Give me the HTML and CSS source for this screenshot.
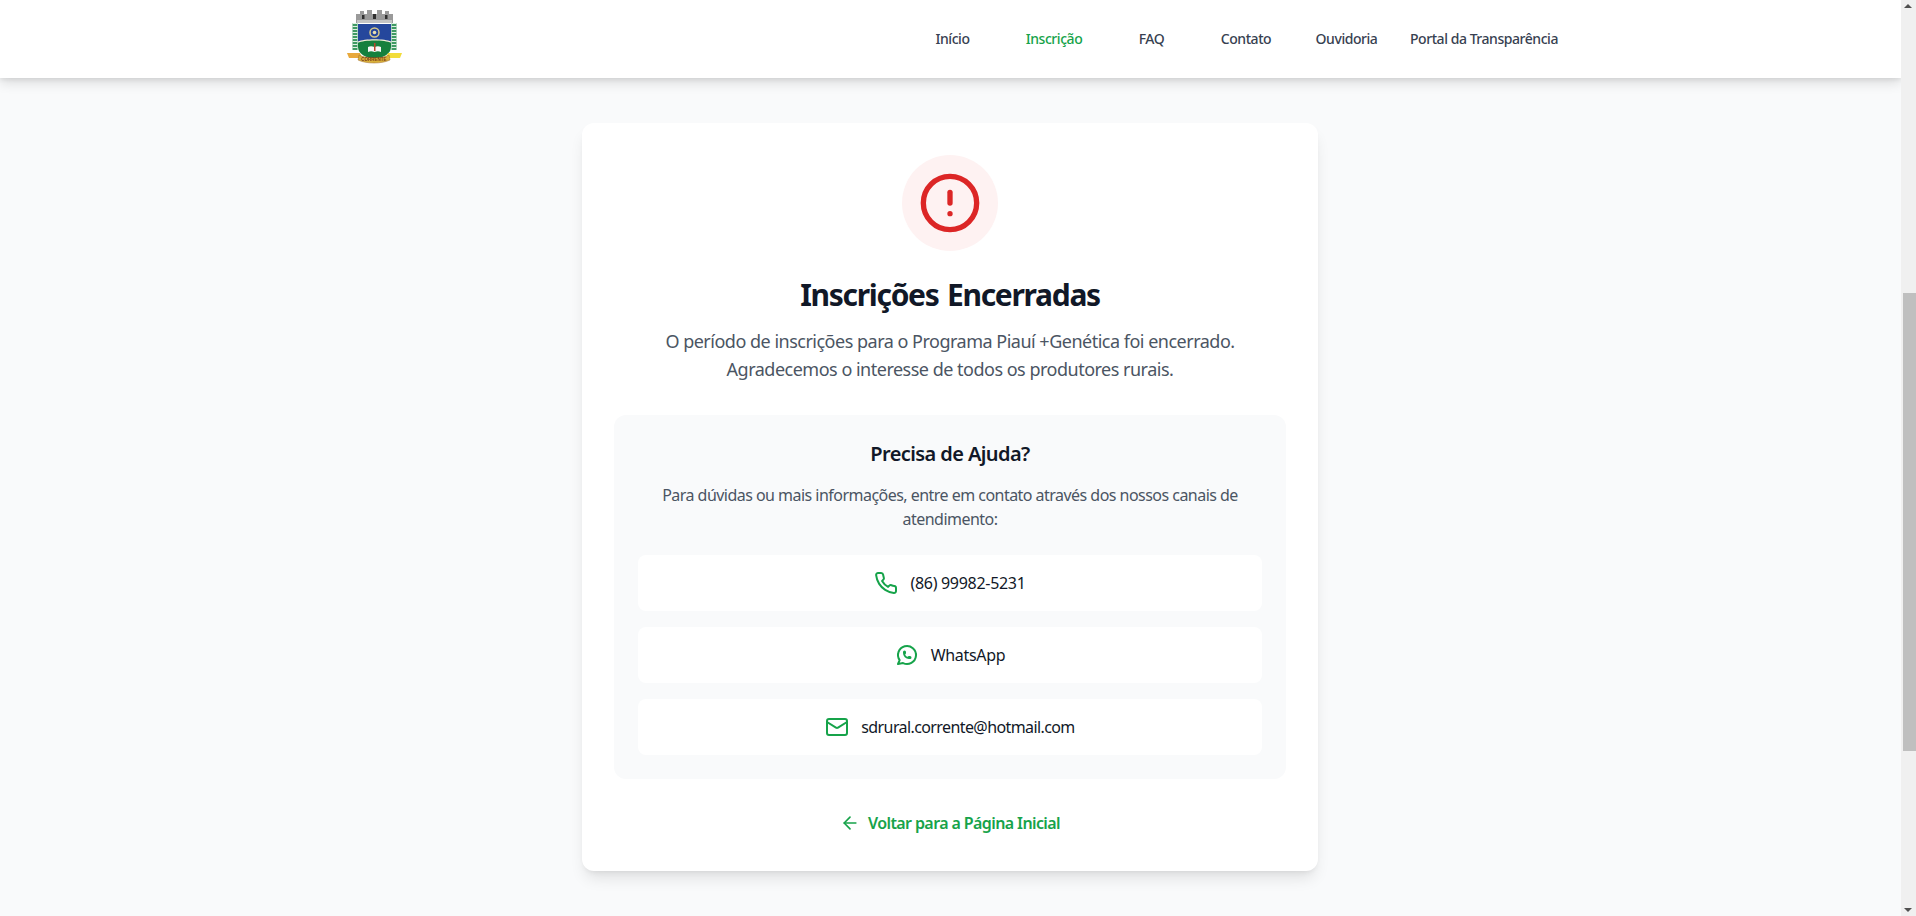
FILE: index.html
```html
<!DOCTYPE html>
<html lang="pt-BR">
<head>
<meta charset="utf-8">
<title>Inscrições Encerradas</title>
<link rel="stylesheet" href="styles.css">
</head>
<body>
<div class="viewport">
  <div class="page">
    <header class="header">
      <div class="header-inner">
        <svg class="logo" viewBox="0 0 64 64" width="64" height="64" role="img" aria-label="Brasão de Corrente">
          <path d="M14 16V7h4V4h4v3h3V3h5v4h5V3h5v4h3V4h4v3h4v9z" fill="#9a9a9a"/>
          <path d="M15 16h35v-3H15z" fill="#c4c4c4"/>
          <rect x="20" y="8" width="2.500" height="4" fill="#2f2f2f"/><rect x="31" y="7" width="3" height="5" fill="#2f2f2f"/><rect x="43" y="8" width="2.500" height="4" fill="#2f2f2f"/>
          <path d="M13 16v27" stroke="#3f9a63" stroke-width="5" fill="none"/>
          <path d="M13 16v27" stroke="#dff0e4" stroke-width="5" stroke-dasharray="1 2" fill="none"/>
          <path d="M52 16v27" stroke="#3f9a63" stroke-width="5" fill="none"/>
          <path d="M52 16v27" stroke="#dff0e4" stroke-width="5" stroke-dasharray="1 2" fill="none"/>
          <path d="M16 17h33v18H16z" fill="#25479c"/>
          <path d="M16 35c6-3 27-3 33 0v5c0 7-8 11-16.500 12C24 51 16 47 16 40z" fill="#15803d"/>
          <path d="M16 34.500c6-3 27-3 33 0v1.200c-6-3-27-3-33 0z" fill="#f5f1d8"/>
          <circle cx="32.500" cy="25.500" r="4.500" fill="none" stroke="#d8c98a" stroke-width="1.500"/>
          <circle cx="32.500" cy="25.500" r="1.800" fill="#eadfae"/>
          <path d="M26 40c2-1 4-1 6.500 0 2.500-1 4.500-1 6.500 0v5c-2-1-4-1-6.500 0-2.500-1-4.500-1-6.500 0z" fill="#f7f7f7"/>
          <path d="M32 36h1.500v8H32z" fill="#b9452c"/>
          <path d="M5 46h13l2 5H7z" fill="#e8a93c"/>
          <path d="M60 46H46l-2 5h14z" fill="#f2dc3a"/>
          <path d="M17 48c8 4 22 4 30 0l1 5c-8 4-24 4-32 0z" fill="#d9b13a" stroke="#a06a2a" stroke-width=".5"/>
          <text class="logo-text" x="32" y="54" text-anchor="middle">CORRENTE</text>
        </svg>
        <nav class="nav">
          <a class="nav-link" href="#">Início</a>
          <a class="nav-link active" href="#">Inscrição</a>
          <a class="nav-link" href="#">FAQ</a>
          <a class="nav-link" href="#">Contato</a>
          <a class="nav-link" href="#">Ouvidoria</a>
          <a class="nav-link" href="#">Portal da Transparência</a>
        </nav>
      </div>
    </header>
    <main class="main">
      <section class="card">
        <div class="alert-circle">
          <svg class="icon-alert" viewBox="0 0 24 24" width="64" height="64" fill="none" stroke="currentColor" stroke-width="2" stroke-linecap="round" stroke-linejoin="round">
            <circle cx="12" cy="12" r="10"/><line x1="12" y1="8" x2="12" y2="12"/><line x1="12" y1="16" x2="12.010" y2="16"/>
          </svg>
        </div>
        <h1 class="title">Inscrições Encerradas</h1>
        <p class="lead">O período de inscrições para o Programa Piauí +Genética foi encerrado.<br>Agradecemos o interesse de todos os produtores rurais.</p>
        <div class="help">
          <h2 class="help-title">Precisa de Ajuda?</h2>
          <p class="help-text">Para dúvidas ou mais informações, entre em contato através dos nossos canais de<br>atendimento:</p>
          <div class="contacts">
            <a class="contact" href="#">
              <svg class="icon" viewBox="0 0 24 24" width="24" height="24" fill="none" stroke="currentColor" stroke-width="2" stroke-linecap="round" stroke-linejoin="round"><path d="M22 16.920v3a2 2 0 0 1-2.180 2 19.790 19.790 0 0 1-8.630-3.070 19.500 19.500 0 0 1-6-6 19.790 19.790 0 0 1-3.070-8.670A2 2 0 0 1 4.110 2h3a2 2 0 0 1 2 1.720 12.840 12.840 0 0 0 .7 2.810 2 2 0 0 1-.45 2.110L8.090 9.910a16 16 0 0 0 6 6l1.270-1.270a2 2 0 0 1 2.110-.45 12.840 12.840 0 0 0 2.810.7A2 2 0 0 1 22 16.920z"/></svg>
              <span>(86) 99982-5231</span>
            </a>
            <a class="contact" href="#">
              <svg class="icon" viewBox="0 0 24 24" width="24" height="24" fill="none" stroke="currentColor" stroke-width="2" stroke-linecap="round" stroke-linejoin="round"><path d="M3 21l1.650-3.800a9 9 0 1 1 3.400 2.900l-5.050.9"/><path d="M9 10a.5.5 0 0 0 1 0V9a.5.5 0 0 0-1 0v1a5 5 0 0 0 5 5h1a.5.5 0 0 0 0-1h-1a.5.5 0 0 0 0 1"/></svg>
              <span>WhatsApp</span>
            </a>
            <a class="contact contact-email" href="#">
              <svg class="icon" viewBox="0 0 24 24" width="24" height="24" fill="none" stroke="currentColor" stroke-width="2" stroke-linecap="round" stroke-linejoin="round"><rect x="2" y="4" width="20" height="16" rx="2"/><path d="m22 7-8.970 5.700a1.940 1.940 0 0 1-2.060 0L2 7"/></svg>
              <span>sdrural.corrente@hotmail.com</span>
            </a>
          </div>
        </div>
        <a class="back" href="#">
          <svg viewBox="0 0 24 24" width="20" height="20" fill="none" stroke="currentColor" stroke-width="2" stroke-linecap="round" stroke-linejoin="round"><path d="m12 19-7-7 7-7"/><path d="M19 12H5"/></svg>
          <span>Voltar para a Página Inicial</span>
        </a>
      </section>
    </main>
  </div>
  <aside class="scrollbar" aria-hidden="true">
    <span class="arrow arrow-up"></span>
    <span class="thumb"></span>
    <span class="arrow arrow-down"></span>
  </aside>
</div>
</body>
</html>
```
FILE: styles.css
```css
* { box-sizing: border-box; }
html, body { margin: 0; height: 100%; overflow: hidden; }
body { font-family: "Noto Sans", "Open Sans", sans-serif; background: #f9fafb; color: #111827; }
a { text-decoration: none; color: inherit; }
h1, h2, p { margin: 0; }

.viewport { display: flex; height: 916px; }
.page { flex: 1; min-width: 0; }

.header { height: 78px; background: #fff; box-shadow: 0 4px 12px rgba(0,0,0,.14), 0 2px 4px rgba(0,0,0,.06); position: relative; }
.header-inner { max-width: 1280px; margin: 0 auto; padding: 0 32px 0 31px; height: 78px; display: flex; align-items: center; justify-content: space-between; }
.logo { display: block; filter: blur(.35px); }
.logo-text { font-size: 4.500px; font-weight: 700; fill: #7a3b1a; font-family: "Liberation Sans", sans-serif; }
.nav { display: grid; grid-template-columns: 122px 81px 114px 75px 126px 149px; align-items: center; padding-bottom: 2px; }
.nav-link { font-size: 14px; font-weight: 500; color: #374151; text-align: center; white-space: nowrap; letter-spacing: -.45px; }
.nav-link.active { color: #16a34a; }

.main { padding: 45px 1px 0 0; display: flex; justify-content: center; }
.card { width: 736px; height: 748px; padding: 32px; background: #fff; border-radius: 12px; box-shadow: 0 10px 15px -3px rgba(0,0,0,.1), 0 4px 6px -4px rgba(0,0,0,.1); text-align: center; }
.alert-circle { width: 96px; height: 96px; margin: 0 auto 24px; border-radius: 50%; background: #fef2f2; color: #dc2626; display: flex; align-items: center; justify-content: center; }
.title { font-size: 30px; line-height: 36px; font-weight: 700; padding-top: 2px; margin-bottom: 14px; letter-spacing: -1.3px; word-spacing: 2px; }
.lead { font-size: 18px; line-height: 28px; color: #4b5563; margin-bottom: 32px; letter-spacing: -.5px; }

.help { background: #f9fafb; border-radius: 12px; padding: 24px; }
.help-title { font-size: 20px; line-height: 28px; font-weight: 600; padding-top: 1px; margin-bottom: 15px; letter-spacing: -.6px; }
.help-text { font-size: 16px; line-height: 24px; color: #4b5563; margin-bottom: 24px; letter-spacing: -.53px; }
.contacts { display: flex; flex-direction: column; gap: 16px; }
.contact { height: 56px; background: #fff; border-radius: 8px; display: flex; align-items: center; justify-content: center; gap: 12px; font-size: 16px; color: #111827; letter-spacing: -.3px; }
.contact-email { letter-spacing: -.6px; }
.icon { color: #16a34a; flex: none; }

.back { margin-top: 32px; height: 24px; display: flex; align-items: center; justify-content: center; gap: 8px; color: #16a34a; font-size: 16px; font-weight: 600; letter-spacing: -.6px; }

.scrollbar { width: 15px; height: 916px; background: #f0f0f0; padding-left: 2px; display: flex; flex-direction: column; align-items: stretch; position: relative; }
.thumb { display: block; height: 458px; margin-top: 293px; background: #bfbfbf; }
.arrow { position: absolute; left: 3px; width: 0; height: 0; border-left: 4.500px solid transparent; border-right: 4.500px solid transparent; }
.arrow-up { top: 4px; border-bottom: 4px solid #505050; }
.arrow-down { bottom: 4px; border-top: 4px solid #505050; }
```
